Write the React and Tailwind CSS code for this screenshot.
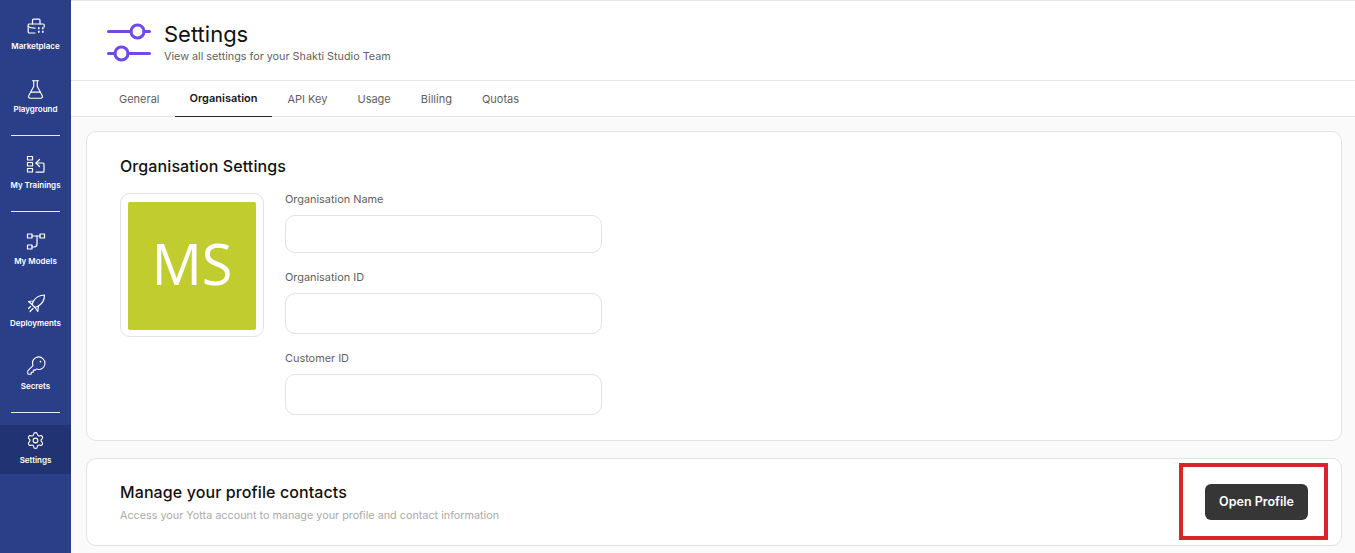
import React from 'react';
import { FlaskConical, Settings } from 'lucide-react';
import { PiKeyLight } from 'react-icons/pi';

function MarketIcon() {
  return (
    <svg width="20" height="20" viewBox="0 0 20 20" fill="none" stroke="currentColor" strokeWidth="1.2" strokeLinecap="round" strokeLinejoin="round">
      <path d="M6.5 8V4.2q0-1 1-1h5.5q1 0 1 1V8" />
      <path d="M18.2 11V9q0-1-1-1H3.2q-1 0-1 1v7q0 1 1 1H9" />
      <path d="M2.2 10.5c1.8 1.2 4 1.7 6.8 1.7" />
      <path d="M12 12.2h1.6M16 12.2h1.6M12 15.8h1.6M16 15.8h1.6" strokeWidth="2" strokeLinecap="butt" />
    </svg>
  );
}

function TrainingsIcon() {
  return (
    <svg width="20" height="20" viewBox="0 0 20 20" fill="none" stroke="currentColor" strokeWidth="1.2" strokeLinecap="round" strokeLinejoin="round">
      <rect x="1.5" y="1.5" width="5" height="3.5" />
      <rect x="1.5" y="7.5" width="5" height="3.5" />
      <rect x="1.5" y="13.5" width="5" height="3.5" />
      <path d="M10 17.2h7q1 0 1-1V9q0-1-1-1h-7" />
      <path d="M13.5 4.5 10 8l3.5 3.5" />
    </svg>
  );
}

function ModelsIcon() {
  return (
    <svg width="20" height="20" viewBox="0 0 20 20" fill="none" stroke="currentColor" strokeWidth="1.2" strokeLinecap="round" strokeLinejoin="round">
      <rect x="1.5" y="3" width="4.5" height="4" />
      <rect x="14" y="3" width="4.5" height="4" />
      <rect x="1.5" y="14" width="4.5" height="4" />
      <path d="M6 5H14" />
      <path d="M11 5V13q0 3-3 3H6" />
    </svg>
  );
}

function RocketIcon() {
  return (
    <svg width="20" height="20" viewBox="0 0 20 20" fill="none" stroke="currentColor" strokeWidth="1.2" strokeLinecap="round" strokeLinejoin="round">
      <path d="M18.5 2C13.5 2.2 10 4 7.5 8L2.5 8.5 6 11.5 9 14.5 11.8 18.5 12.5 13C16.5 10.5 18.5 7 18.5 2Z" />
      <path d="M7.5 8 6 11.5M12.5 13 9 14.5" />
      <path d="M4.5 13.5 2.5 15.5M7 15.5 4 18.5" />
    </svg>
  );
}

const sliderIcon = (
  <svg width="46" height="40" viewBox="0 0 46 40" fill="none" stroke="#7049e8" strokeWidth="3" strokeLinecap="round">
    <path d="M1.5 9.5H24M37 9.5h5.5" />
    <circle cx="30.5" cy="9.5" r="6.5" />
    <path d="M1.5 31.5H8M21 31.5h21.5" />
    <circle cx="14.5" cy="31.5" r="6.5" />
  </svg>
);

function NavItem({ icon, label, className = '' }) {
  return (
    <div className={`flex flex-col items-center ${className}`}>
      <div className="h-5 flex items-center justify-center">{icon}</div>
      <span className="text-[8px] font-semibold leading-[12px] mt-1 whitespace-nowrap">{label}</span>
    </div>
  );
}

function Field({ label, inputClass }) {
  return (
    <div>
      <label className="block text-[10.9px] leading-[14px] text-[#5f5f5f]">{label}</label>
      <div className={`mt-[9px] w-[317px] rounded-[10px] border border-[#e2e2e4] bg-white ${inputClass}`} />
    </div>
  );
}

export default function App() {
  const tabs = ['General', 'Organisation', 'API Key', 'Usage', 'Billing', 'Quotas'];

  return (
    <div className="relative flex h-[553px] w-[1355px] overflow-hidden bg-[#fafafa] font-['Inter',sans-serif]">
      <aside className="w-[71px] shrink-0 bg-[#2a3f87] text-white flex flex-col pt-[16px]">
        <NavItem icon={<MarketIcon />} label="Marketplace" />
        <NavItem icon={<FlaskConical size={21} strokeWidth={1.3} />} label="Playground" className="mt-[27px]" />
        <div className="mx-[11px] mt-[20px] h-px bg-white/90" />
        <NavItem icon={<TrainingsIcon />} label="My Trainings" className="mt-[19px]" />
        <div className="mx-[11px] mt-[20px] h-px bg-white/90" />
        <NavItem icon={<ModelsIcon />} label="My Models" className="mt-[19px]" />
        <NavItem icon={<RocketIcon />} label="Deployments" className="mt-[26px]" />
        <NavItem icon={<PiKeyLight size={22} />} label="Secrets" className="mt-[27px]" />
        <div className="mx-[11px] mt-[20px] h-px bg-white/90" />
        <div className="mt-[12px] h-[49px] bg-[#223373] pt-[5px]">
          <NavItem icon={<Settings size={19} strokeWidth={1.4} />} label="Settings" />
        </div>
      </aside>

      <main className="flex-1 min-w-0">
        <header className="h-[81px] bg-white border-t border-b border-[#e5e5e5] flex items-center pl-[36px] pt-[2px]">
          {sliderIcon}
          <div className="ml-[11px] mt-px">
            <h1 className="text-[22px] leading-[26px] text-[#111] font-normal">Settings</h1>
            <p className="text-[10.8px] leading-[14px] mt-[3px] text-[#5f5f5f]">View all settings for your Shakti Studio Team</p>
          </div>
        </header>

        <nav className="h-[36px] bg-white border-b border-[#e5e5e5] flex pl-[33px]">
          {tabs.map((tab) => (
            <div
              key={tab}
              className={`h-[36px] px-[15px] flex items-center text-[11px] ${tab === 'Organisation' ? 'border-b border-[#1f2937] font-semibold text-[#18181b]' : 'text-[#5f5f5f]'}`}
            >
              {tab}
            </div>
          ))}
        </nav>

        <section className="mt-[14px] ml-[15px] mr-[13px] rounded-[10px] border border-[#e2e2e4] bg-white pl-[33px] pt-[24px] pb-[25px]">
          <h2 className="text-[16px] leading-[20px] font-medium tracking-[0.1px] text-[#111]">Organisation Settings</h2>
          <div className="flex mt-[16px]">
            <div className="mt-px w-[144px] h-[144px] rounded-[10px] border border-[#e2e2e4] flex items-center justify-center">
              <div className="mt-[2px] w-[128px] h-[128px] pb-[6px] rounded-[2px] bg-[#c1cd2f] flex items-center justify-center text-white text-[56px] font-['Open_Sans',sans-serif]">MS</div>
            </div>
            <div className="ml-[21px] flex flex-col gap-[17px]">
              <Field label="Organisation Name" inputClass="h-[38px]" />
              <Field label="Organisation ID" inputClass="h-[41px]" />
              <Field label="Customer ID" inputClass="h-[41px]" />
            </div>
          </div>
        </section>

        <section className="mt-[17px] ml-[15px] mr-[13px] h-[88px] rounded-[10px] border border-[#e2e2e4] bg-white pl-[33px] pr-[33px] flex items-center justify-between">
          <div>
            <h2 className="text-[16px] leading-[20px] font-medium tracking-[0.1px] text-[#111]">Manage your profile contacts</h2>
            <p className="text-[10.8px] leading-[14px] mt-[7px] text-[#aaa]">Access your Yotta account to manage your profile and contact information</p>
          </div>
          <button className="w-[103px] h-[36px] rounded-[6px] bg-[#363636] text-white text-[12.5px] font-semibold">Open Profile</button>
        </section>
      </main>

      <div className="absolute left-[1179px] top-[463px] w-[149px] h-[77px] border-[4px] border-[#d9242b]" />
    </div>
  );
}
